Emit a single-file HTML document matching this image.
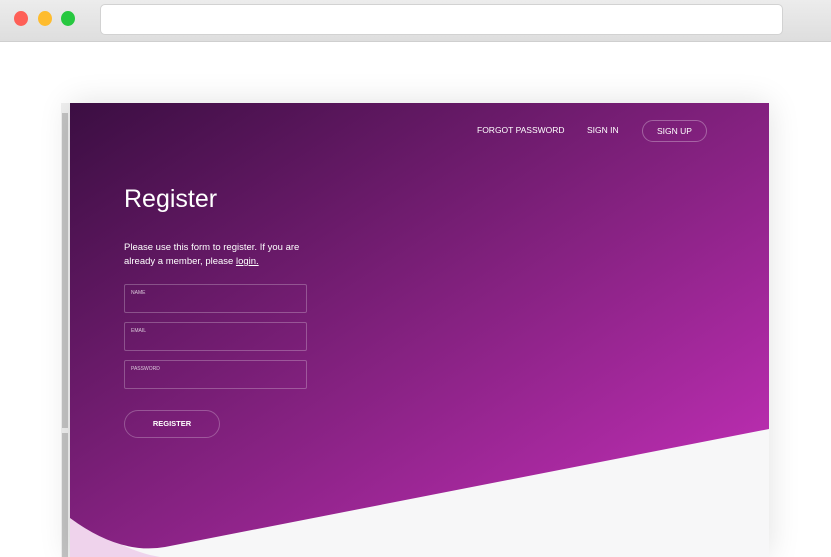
<!DOCTYPE html>
<html><head><style>
*{margin:0;padding:0;box-sizing:border-box}
body{width:831px;height:557px;overflow:hidden;background:#fff;font-family:"Liberation Sans",sans-serif;position:relative}
.chrome{position:absolute;left:0;top:0;width:831px;height:42px;background:linear-gradient(#ececec,#dedede);border-bottom:1px solid #cfcfcf}
.dot{position:absolute;top:11px;width:14px;height:15px;border-radius:50%}
.addr{position:absolute;left:100px;top:4px;width:683px;height:31px;background:#fff;border:1px solid #d2d2d2;border-radius:5px}
.frame{position:absolute;left:70px;top:103px;width:699px;height:454px;box-shadow:0 0 30px rgba(0,0,0,.12);overflow:hidden;background:#f7f7f8}
.sb{position:absolute;left:61px;top:103px;width:9px;height:454px;background:#f0f0f0}
.txt{position:absolute;color:#fff}
.inp{position:absolute;left:54px;width:183px;height:29px;border:1px solid rgba(255,255,255,.25);border-radius:2px}
.inp span{position:absolute;left:6px;top:5px;font-size:5px;color:rgba(255,255,255,.75)}
</style></head><body>
<div class="chrome">
<div class="dot" style="left:14px;background:#fe5f57"></div>
<div class="dot" style="left:38px;background:#febc2e"></div>
<div class="dot" style="left:61px;background:#27c840"></div>
<div class="addr"></div>
</div>
<div class="sb"><div style="position:absolute;left:1px;top:10px;width:6px;height:315px;background:#c4c4c4"></div><div style="position:absolute;left:1px;top:330px;width:6px;height:124px;background:#c4c4c4"></div></div>
<div class="frame">
<svg width="699" height="454" style="position:absolute;left:0;top:0">
<defs><linearGradient id="g" x1="0" y1="0" x2="1" y2="1">
<stop offset="0" stop-color="#3b0e42"/><stop offset="0.5" stop-color="#83217f"/><stop offset="1" stop-color="#c930bd"/></linearGradient></defs>
<path d="M0 405 Q35 440 80 452 L90 454 L0 454Z" fill="#efd3ec"/>
<path d="M0 0 H699 V326 L95 444 Q50 452 0 415Z" fill="url(#g)"/>
</svg>
<div class="txt" style="left:407px;top:22px;font-size:8.5px">FORGOT PASSWORD</div>
<div class="txt" style="left:517px;top:22px;font-size:8.5px">SIGN IN</div>
<div style="position:absolute;left:572px;top:17px;width:65px;height:22px;border:1px solid rgba(255,255,255,.3);border-radius:11px;color:#fff;font-size:8.5px;text-align:center;line-height:20px">SIGN UP</div>
<div class="txt" style="left:54px;top:82px;font-size:25px">Register</div>
<div class="txt" style="left:54px;top:138px;font-size:9.5px;line-height:14px">Please use this form to register. If you are<br>already a member, please <u>login.</u></div>
<div class="inp" style="top:181px"><span>NAME</span></div>
<div class="inp" style="top:219px"><span>EMAIL</span></div>
<div class="inp" style="top:257px"><span>PASSWORD</span></div>
<div style="position:absolute;left:54px;top:307px;width:96px;height:28px;border:1px solid rgba(255,255,255,.25);border-radius:14px;color:#fff;font-size:7.5px;font-weight:bold;text-align:center;line-height:26px">REGISTER</div>
</div>
</body></html>
